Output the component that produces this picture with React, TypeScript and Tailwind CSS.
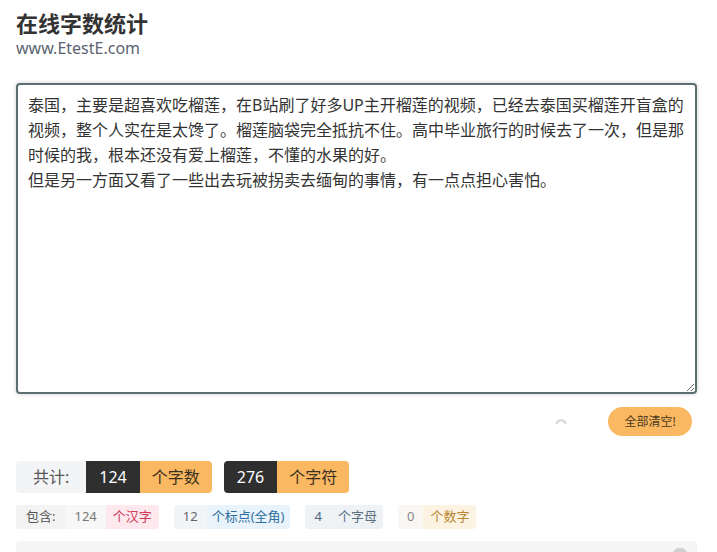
import { useState } from 'react';

const SAMPLE =
  '泰国，主要是超喜欢吃榴莲，在B站刷了好多UP主开榴莲的视频，已经去泰国买榴莲开盲盒的视频，整个人实在是太馋了。榴莲脑袋完全抵抗不住。高中毕业旅行的时候去了一次，但是那时候的我，根本还没有爱上榴莲，不懂的水果的好。\n但是另一方面又看了一些出去玩被拐卖去缅甸的事情，有一点点担心害怕。';

// figures as shown by the original counter for the sample text
const STATS = { words: 124, chars: 276, han: 124, punct: 12, letters: 4, digits: 0 };

export default function App() {
  const [text, setText] = useState(SAMPLE);
  const c = STATS;

  return (
    <div className="min-h-screen bg-white pl-4 pr-5 font-['Noto_Sans','Noto_Sans_CJK_SC',sans-serif] text-[#333]">
      {/* Header */}
      <h1 className="pt-2 text-[22px] font-bold leading-[30px] text-[#333]">在线字数统计</h1>
      <div className="text-[16px] leading-[20px] text-[#5b6472]">www.EtestE.com</div>

      {/* Input */}
      <textarea
        value={text}
        onChange={(e) => setText(e.target.value)}
        className="mt-[25px] block h-[311px] w-full rounded-[4px] border-2 border-[#5b6e70] bg-white pt-[8px] pl-[10px] pr-[7px] text-[16px] leading-[25px] text-[#333] shadow-[0_0_4px_rgba(0,0,0,0.2)] outline-none"
      />

      {/* Actions */}
      <div className="mt-[13px] flex items-center justify-end pr-[5px]">
        <svg width="14" height="14" viewBox="0 0 14 14" className="mr-[40px]">
          <path d="M2.5 8 A5 5 0 0 1 11.5 8" fill="none" stroke="#d4d4d4" strokeWidth="2" strokeLinecap="round" />
        </svg>
        <button
          onClick={() => setText('')}
          className="h-[29px] w-[84px] rounded-full bg-[#fbb862] text-[12px] text-[#4a3a20]"
        >
          全部清空!
        </button>
      </div>

      {/* Totals */}
      <div className="mt-[25px] flex items-center gap-3 text-[16px]">
        <div className="flex h-8 items-stretch">
          <span className="flex items-center rounded-l-[4px] bg-[#f3f4f6] px-[17px] text-[#555]">共计:</span>
          <span className="flex items-center bg-[#2f2f2f] px-[13px] text-white">{c.words}</span>
          <span className="flex items-center rounded-r-[4px] bg-[#fbb862] px-3 text-[#3a3020]">个字数</span>
        </div>
        <div className="flex h-8 items-stretch">
          <span className="flex items-center rounded-l-[4px] bg-[#2f2f2f] px-[13px] text-white">{c.chars}</span>
          <span className="flex items-center rounded-r-[4px] bg-[#fbb862] px-3 text-[#3a3020]">个字符</span>
        </div>
      </div>

      {/* Breakdown */}
      <div className="mt-3 flex items-center gap-[15px] text-[13px]">
        <div className="flex h-6 items-stretch">
          <span className="flex items-center rounded-l-[3px] bg-[#f3f3f3] px-[10px] text-[#555]">包含:</span>
          <span className="flex items-center bg-[#f7f7f7] px-[9px] text-[#777]">{c.han}</span>
          <span className="flex items-center rounded-r-[3px] bg-[#fde8ee] px-[7px] text-[#d03a58]">个汉字</span>
        </div>
        <div className="flex h-6 items-stretch">
          <span className="flex items-center rounded-l-[3px] bg-[#f2f5f8] px-[9px] text-[#666]">{c.punct}</span>
          <span className="flex items-center rounded-r-[3px] bg-[#e8f3fc] px-[5px] text-[#2f6e9e]">个标点(全角)</span>
        </div>
        <div className="flex h-6 items-stretch">
          <span className="flex items-center rounded-l-[3px] bg-[#eef2f5] px-[10px] text-[#4d6580]">{c.letters}</span>
          <span className="flex items-center rounded-r-[3px] bg-[#eef2f5] px-[6px] text-[#5a6f80]">个字母</span>
        </div>
        <div className="flex h-6 items-stretch">
          <span className="flex items-center rounded-l-[3px] bg-[#f8f7f4] px-[9px] text-[#888]">{c.digits}</span>
          <span className="flex items-center rounded-r-[3px] bg-[#fdf3e3] px-[7px] text-[#b8862f]">个数字</span>
        </div>
      </div>

      {/* Next panel */}
      <div className="mt-3 flex h-[40px] justify-end rounded-[4px] bg-[#f5f5f5] pt-[7px] pr-[9px]">
        <span className="h-4 w-4 rounded-full bg-[#cfcfcf]" />
      </div>
    </div>
  );
}
